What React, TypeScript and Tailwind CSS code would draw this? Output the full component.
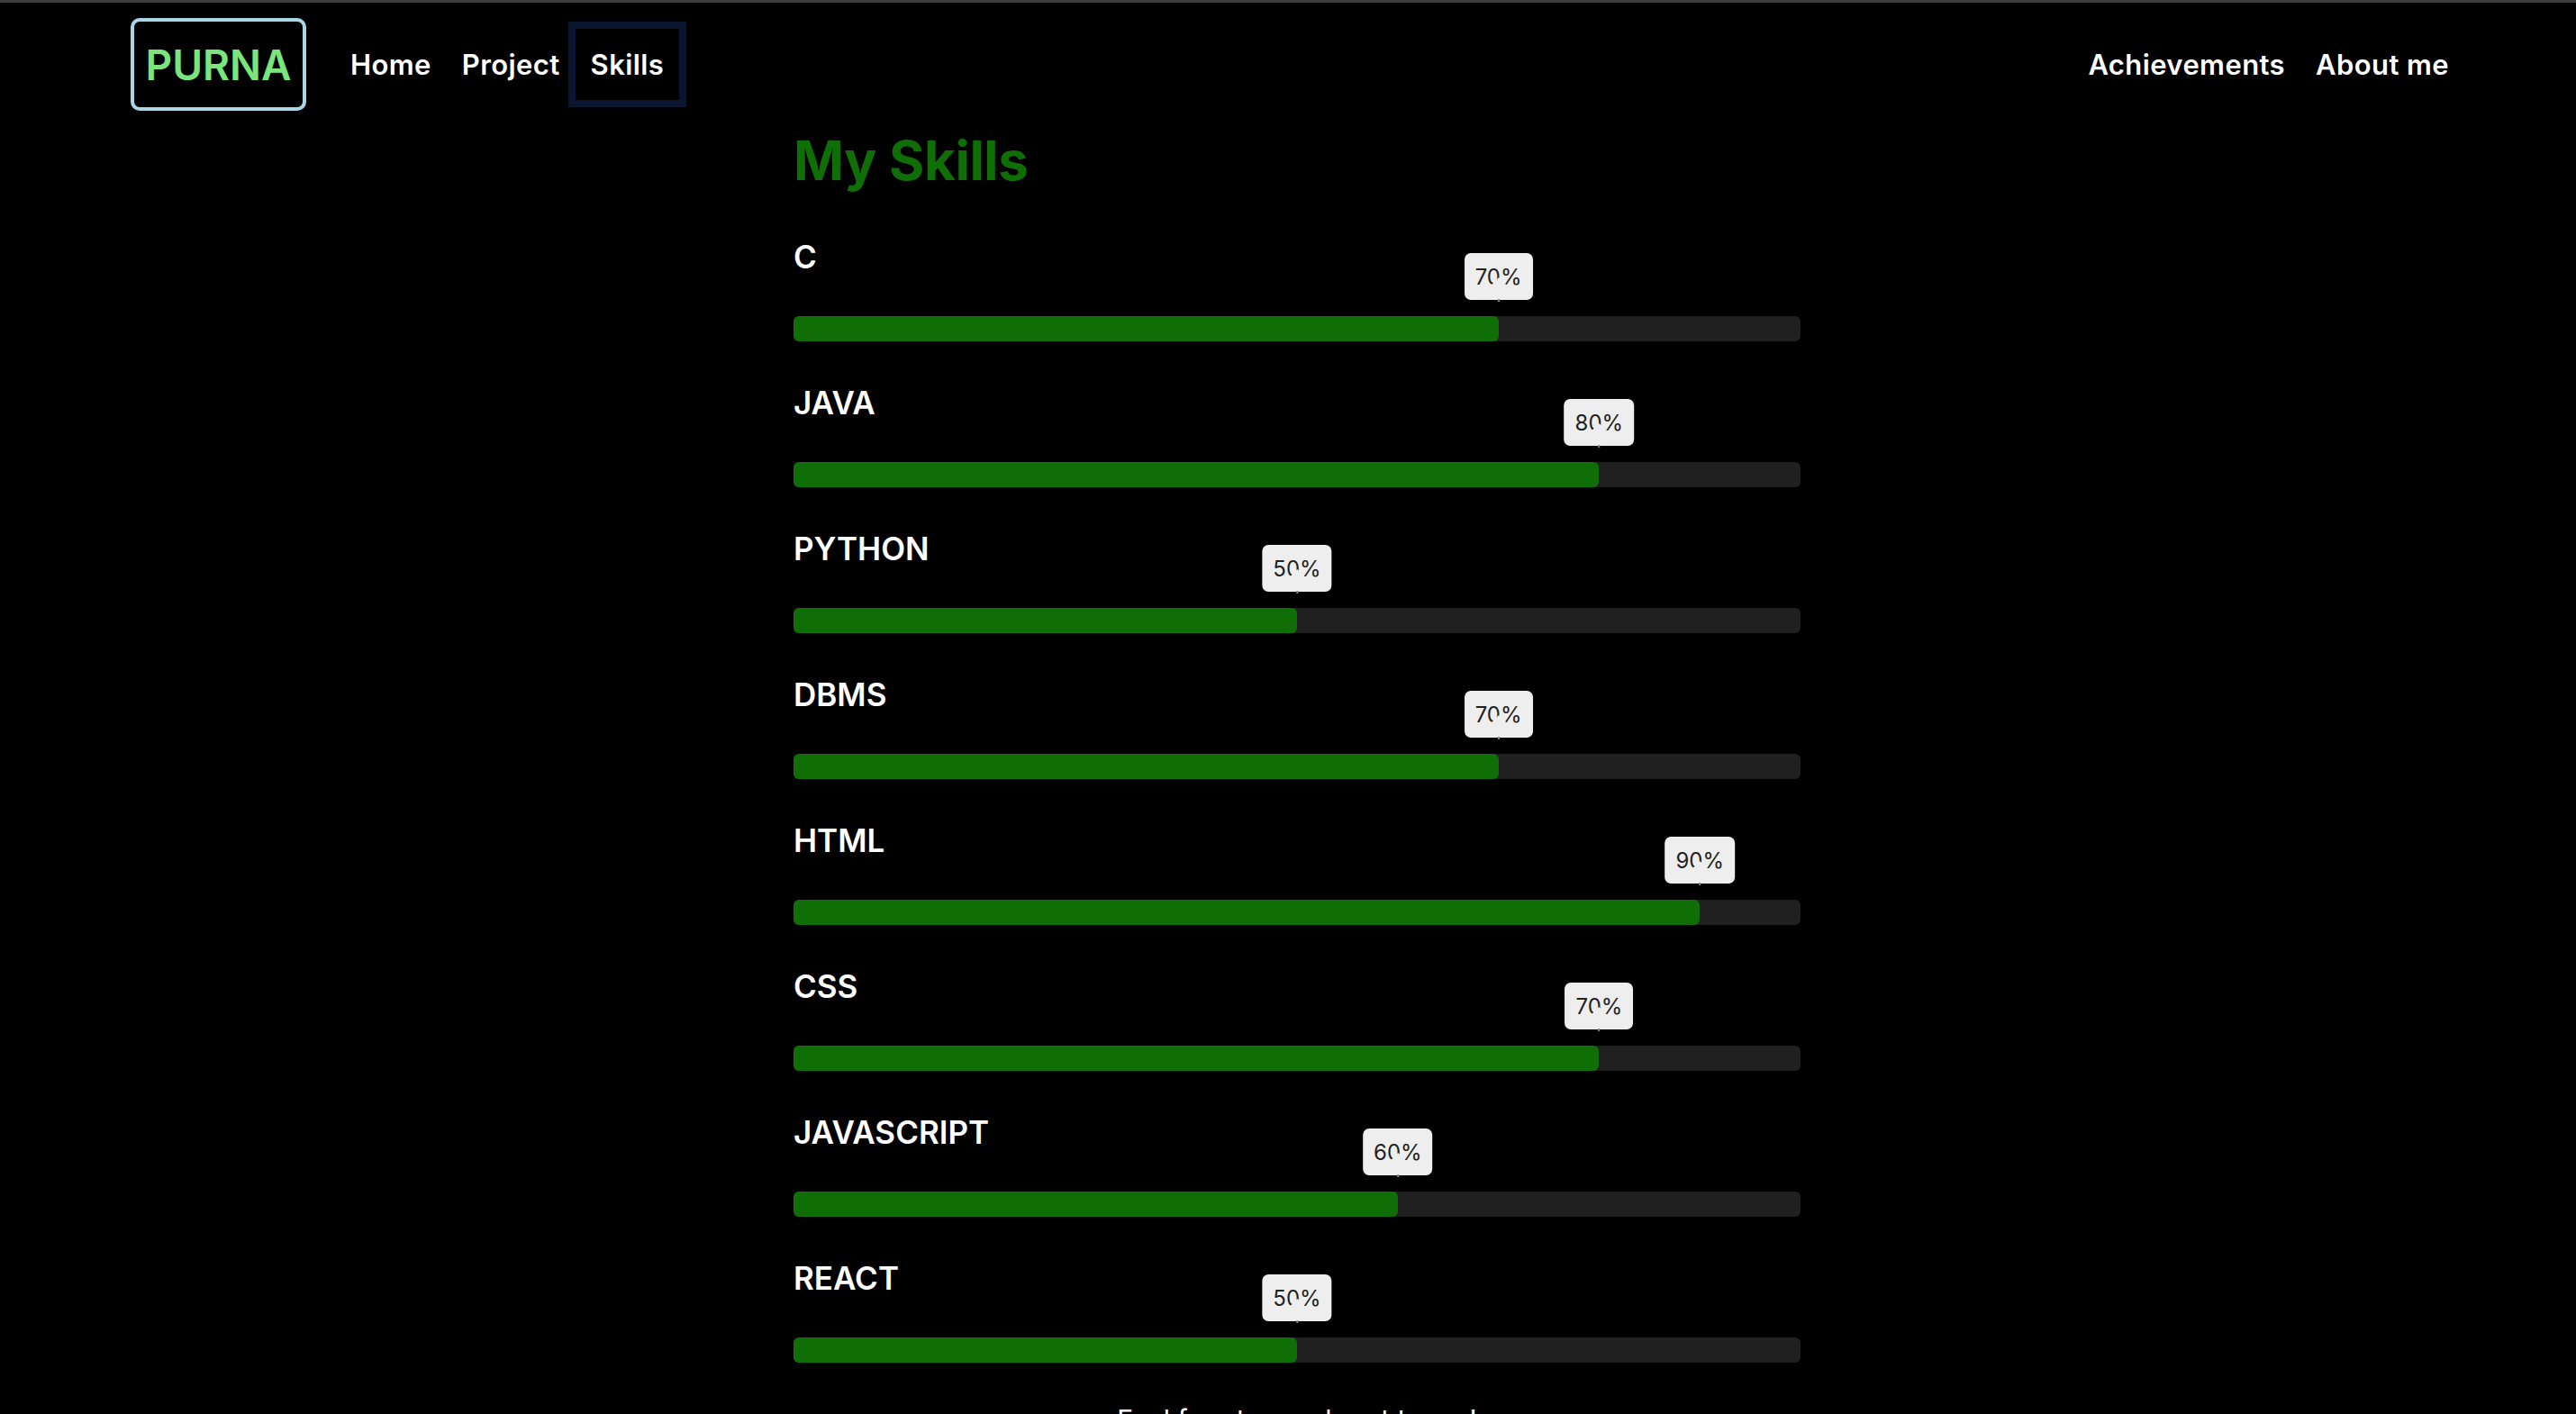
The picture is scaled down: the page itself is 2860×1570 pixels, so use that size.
import React from "react";

type Skill = { name: string; label: string; pos: number };

const skills: Skill[] = [
  { name: "C", label: "70%", pos: 70 },
  { name: "JAVA", label: "80%", pos: 80 },
  { name: "PYTHON", label: "50%", pos: 50 },
  { name: "DBMS", label: "70%", pos: 70 },
  { name: "HTML", label: "90%", pos: 90 },
  { name: "CSS", label: "70%", pos: 80 },
  { name: "JAVASCRIPT", label: "60%", pos: 60 },
  { name: "REACT", label: "50%", pos: 50 },
];

function SkillRow({ s }: { s: Skill }) {
  return (
    <div className="flex flex-col">
      <div className="text-[35px] leading-[41px] font-semibold text-white">{s.name}</div>
      <div className="relative mt-[45px] h-[28px] w-full rounded-[6px] bg-[#202020]">
        <div
          className="h-full rounded-[6px] bg-[#0f6e05]"
          style={{ width: `${s.pos}%` }}
        />
        <div
          className="absolute bottom-[46px] -translate-x-1/2"
          style={{ left: `${s.pos}%` }}
        >
          <div className="relative flex h-[52px] items-center rounded-[7px] bg-[#eeeeee] px-[12px] text-[24px] leading-[29px] text-[#222222]">
            <span>{s.label}</span>
            <div className="absolute bottom-[8px] left-1/2 h-[14px] w-[14px] -translate-x-1/2 rotate-45 bg-[#eeeeee]" />
            <div className="absolute -bottom-[2px] left-1/2 h-[3px] w-[2px] -translate-x-1/2 bg-[#8a8a8a]" />
          </div>
        </div>
      </div>
    </div>
  );
}

export default function App() {
  return (
    <div className="min-h-screen overflow-hidden border-t-[3px] border-[#3d3d3d] bg-black font-['Inter','Noto_Sans',sans-serif]">
      <header className="mt-[17px] flex h-[103px] items-center justify-between pl-[145px] pr-[124px]">
        <div className="flex items-center">
          <div className="flex h-[103px] w-[195px] items-center justify-center rounded-[10px] border-[4px] border-[#a9d6e5] text-[46px] font-semibold leading-none text-[#7ae57a]">
            PURNA
          </div>
          <nav className="ml-[32px] flex items-center text-[31px] font-semibold tracking-[0.4px] text-white">
            <a className="px-[17px] py-[21px] leading-[37px]">Home</a>
            <a className="px-[17px] py-[21px] leading-[37px]">Project</a>
            <a className="px-[17px] py-[21px] leading-[37px] outline-[8px] outline-solid outline-[#0b1430]">
              Skills
            </a>
          </nav>
        </div>
        <nav className="flex items-center text-[31px] font-semibold tracking-[0.4px] text-white">
          <a className="px-[17px] py-[21px] leading-[37px]">Achievements</a>
          <a className="px-[17px] py-[21px] leading-[37px]">About me</a>
        </nav>
      </header>

      <div className="flex justify-center pl-[20px]">
        <main className="mt-[18px] w-[1118px]">
          <h1 className="text-[60px] font-bold leading-[75px] tracking-[-0.3px] text-[#0f6e05]">My Skills</h1>
          <div className="mt-[49px] flex flex-col gap-[48px]">
            {skills.map((s) => (
              <SkillRow key={s.name} s={s} />
            ))}
          </div>
          <p className="mt-[45px] text-center text-[30px] leading-[36px] text-white">
            Feel free to reach out to me!
          </p>
        </main>
      </div>
    </div>
  );
}
